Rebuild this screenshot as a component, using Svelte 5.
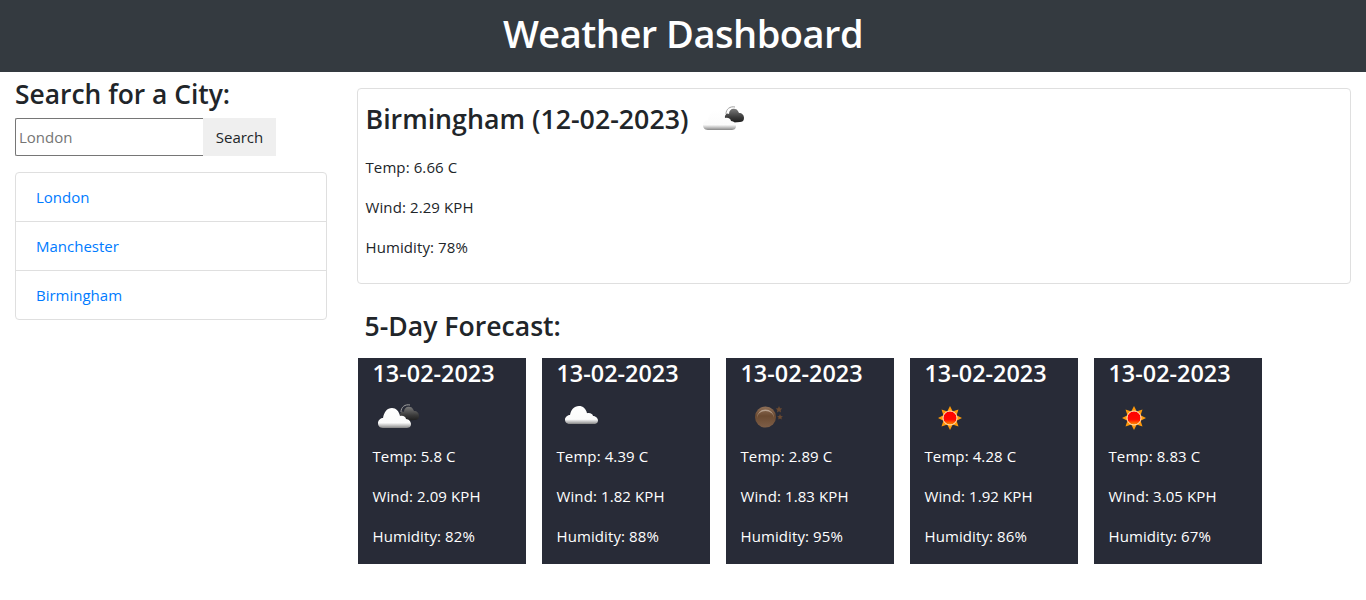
<script lang="ts">
	const cities = ['London', 'Manchester', 'Birmingham'];
	const forecast = [
		{ date: '13-02-2023', icon: 'broken', temp: '5.8', wind: '2.09', humidity: 82 },
		{ date: '13-02-2023', icon: 'cloud', temp: '4.39', wind: '1.82', humidity: 88 },
		{ date: '13-02-2023', icon: 'moon', temp: '2.89', wind: '1.83', humidity: 95 },
		{ date: '13-02-2023', icon: 'sun', temp: '4.28', wind: '1.92', humidity: 86 },
		{ date: '13-02-2023', icon: 'sun', temp: '8.83', wind: '3.05', humidity: 67 }
	];
	const rays = [0, 45, 90, 135, 180, 225, 270, 315];
	const cloud =
		'M10 36C6 36 5 33 5 31C5 28 8 26 10 26C11 20 14 16 19 16C23 16 26 19 27 24C30 23 33 25 33 27C36 27 38 30 38 32C38 35 36 36 33 36Z';
</script>

{#snippet icon(kind: string, id: string)}
	<svg class="icon" viewBox="0 0 50 50" width="50" height="50" aria-hidden="true">
		<defs>
			<linearGradient id="{id}-white" x1="0" y1="0" x2="0" y2="1">
				<stop offset="0" stop-color="#fff" />
				<stop offset="0.74" stop-color="#fbfbfb" />
				<stop offset="0.9" stop-color="#b5b5b5" />
				<stop offset="1" stop-color="#858585" />
			</linearGradient>
			<linearGradient id="{id}-dark" x1="0" y1="0" x2="0" y2="1">
				<stop offset="0" stop-color="#7a7a7a" />
				<stop offset="0.6" stop-color="#3a3a3a" />
				<stop offset="1" stop-color="#1c1c1c" />
			</linearGradient>
			<linearGradient id="{id}-red" x1="0" y1="0" x2="0" y2="1">
				<stop offset="0" stop-color="#ff0000" />
				<stop offset="0.6" stop-color="#ff0800" />
				<stop offset="1" stop-color="#ffa000" />
			</linearGradient>
			<linearGradient id="{id}-brown" x1="0" y1="0" x2="0" y2="1">
				<stop offset="0" stop-color="#8f7058" />
				<stop offset="0.45" stop-color="#6b4a31" />
				<stop offset="1" stop-color="#7d5e47" />
			</linearGradient>
		</defs>
		{#if kind === 'broken'}
			<path d="M28 20C28 15 32 12 37 13" fill="none" stroke="#a0a0a0" stroke-width="1" />
			<path d="M30 29C27 29 26 24 27 22C28 19 30 19 31 20C31 16 34 14 37 15C39 15 40 17 41 19C44 19 46 21 46 24C46 27 44 28 42 28Z" fill="url(#{id}-dark)" />
			<path d={cloud} fill="url(#{id}-white)" />
		{:else if kind === 'cloud'}
			<path d={cloud} fill="url(#{id}-white)" transform="translate(3 -0.4) scale(1 .9)" />
		{:else if kind === 'moon'}
			<circle cx="24.500" cy="25" r="10.500" fill="url(#{id}-brown)" />
			<path d="M16 26a8.500 8.500 0 0 1 17 0a8.500 7 0 0 0-17 0z" fill="#b8a18e" />
			<path d="M38 14l1 2.200 2.300.3-1.700 1.600.4 2.300-2-1.100-2 1.100.4-2.300-1.700-1.600 2.300-.3z" fill="#6b4a31" />
			<path d="M39 22l.9 1.900 2 .3-1.500 1.400.4 2-1.800-1-1.800 1 .4-2-1.500-1.400 2-.3z" fill="#6b4a31" />
		{:else}
			{#each rays as r}
				<path d="M25 14l3.500 7h-7z" fill="#ff9a0a" transform="rotate({r} 25 26)" />
			{/each}
			<circle cx="25" cy="26" r="7" fill="url(#{id}-red)" stroke="#ffe4c4" stroke-width="1" />
		{/if}
	</svg>
{/snippet}

<header class="top">
	<h1>Weather Dashboard</h1>
</header>

<div class="page">
	<aside class="side">
		<h3>Search for a City:</h3>
		<form class="search" onsubmit={(e) => e.preventDefault()}>
			<input type="text" placeholder="London" />
			<button type="submit">Search</button>
		</form>
		<ul class="cities">
			{#each cities as city}
				<li><a href="#{city}">{city}</a></li>
			{/each}
		</ul>
	</aside>

	<main class="content">
		<section class="today">
			<h2>Birmingham (12-02-2023) <span class="today-icon">{@render icon('broken', 'today')}</span></h2>
			<p>Temp: 6.66 C</p>
			<p>Wind: 2.29 KPH</p>
			<p>Humidity: 78%</p>
		</section>

		<h3 class="heading">5-Day Forecast:</h3>
		<div class="days">
			{#each forecast as day, i}
				<article class="day">
					<h4>{day.date}</h4>
					{@render icon(day.icon, `day${i}`)}
					<p>Temp: {day.temp} C</p>
					<p>Wind: {day.wind} KPH</p>
					<p>Humidity: {day.humidity}%</p>
				</article>
			{/each}
		</div>
	</main>
</div>

<style>
	:global(body) {
		font-family: 'Open Sans', 'Noto Sans', sans-serif;
		font-size: 16px;
		line-height: 1.5;
		color: #212529;
		background: #fff;
	}
	h1,
	h2,
	h3,
	h4,
	p {
		margin: 0;
	}
	.top {
		height: 72px;
		background: #343a40;
		color: #fff;
		display: flex;
		justify-content: center;
		padding-top: 9px;
		box-sizing: border-box;
	}
	.top h1 {
		font-size: 38px;
		font-weight: 600;
		line-height: 48px;
		letter-spacing: -0.5px;
	}
	.page {
		display: grid;
		grid-template-columns: 341.5px 1fr;
	}
	.side {
		padding: 0 15px;
	}
	.side h3 {
		font-size: 26.4px;
		font-weight: 600;
		line-height: 44px;
	}
	.search {
		display: flex;
		margin-top: 2px;
	}
	.search input {
		width: 188px;
		height: 38px;
		box-sizing: border-box;
		border: 1px solid #767676;
		border-right: none;
		border-radius: 2px 0 0 2px;
		padding: 0 3px;
		font: inherit;
		font-size: 15px;
		outline: none;
	}
	.search input::placeholder {
		color: #757575;
	}
	.search button {
		width: 73px;
		height: 38px;
		border: none;
		background: #efefef;
		color: #212529;
		font: inherit;
		font-size: 15px;
		padding: 0;
	}
	.cities {
		list-style: none;
		margin: 16px 0 0;
		padding: 0;
		border: 1px solid #dfdfdf;
		border-radius: 4px;
	}
	.cities li {
		height: 48px;
		padding-left: 20px;
		display: flex;
		align-items: center;
		font-size: 15px;
	}
	.cities li + li {
		border-top: 1px solid #dfdfdf;
	}
	.cities a {
		color: #007bff;
		text-decoration: none;
	}
	.content {
		padding: 16px 15px 0;
	}
	.today {
		height: 196px;
		box-sizing: border-box;
		border: 1px solid #dfdfdf;
		border-radius: 4px;
		padding: 8px;
	}
	.today h2 {
		font-size: 26.75px;
		font-weight: 600;
		line-height: 44px;
		margin-bottom: 14px;
		display: flex;
		align-items: center;
		gap: 10px;
		height: 44px;
	}
	.today-icon {
		display: flex;
	}
	.today p {
		font-size: 15px;
		line-height: 24px;
		margin-bottom: 16px;
		letter-spacing: 0.1px;
	}
	.heading {
		font-size: 26.6px;
		font-weight: 600;
		line-height: 36px;
		margin: 24px 0 14px 8px;
	}
	.days {
		display: flex;
		gap: 16px;
		padding-left: 1px;
	}
	.day {
		width: 168px;
		height: 206px;
		box-sizing: border-box;
		background: #282b37;
		color: #fff;
		padding: 0 15px;
	}
	.day h4 {
		font-size: 23.4px;
		font-weight: 600;
		line-height: 30px;
	}
	.icon {
		display: block;
	}
	.day .icon {
		margin: 4px 0 2px;
	}
	.day p {
		font-size: 15px;
		line-height: 24px;
		margin-bottom: 16px;
		letter-spacing: 0.1px;
	}
</style>
